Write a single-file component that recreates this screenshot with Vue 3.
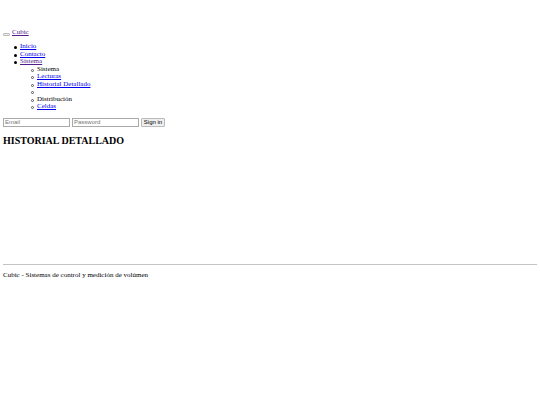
<script setup>
const links = [
  { text: 'Inicio' },
  { text: 'Contacto' },
  {
    text: 'Sistema',
    visited: true,
    children: [
      { text: 'Sistema', header: true },
      { text: 'Lecturas' },
      { text: 'Historial Detallado' },
      { text: '', header: true },
      { text: 'Distribución', header: true },
      { text: 'Celdas' },
    ],
  },
]
</script>

<template>
  <div class="page">
    <header>
      <div class="brand-row">
        <button type="button" class="toggle" aria-label="Menu"></button>
        <a href="#" class="visited">Cubic</a>
      </div>
      <nav>
        <ul class="menu">
          <li v-for="link in links" :key="link.text">
            <a href="#" :class="{ visited: link.visited }">{{ link.text }}</a>
            <ul v-if="link.children" class="submenu">
              <li v-for="(child, i) in link.children" :key="i">
                <template v-if="child.header">{{ child.text }}</template>
                <a v-else href="#">{{ child.text }}</a>
              </li>
            </ul>
          </li>
        </ul>
      </nav>
      <form class="login" @submit.prevent>
        <input type="text" placeholder="Email" aria-label="Email" />
        <input type="password" placeholder="Password" aria-label="Password" />
        <button type="submit">Sign in</button>
      </form>
    </header>
    <main>
      <h2>HISTORIAL DETALLADO</h2>
    </main>
    <hr />
    <footer>
      <p>Cubic - Sistemas de control y medición de volúmen</p>
    </footer>
  </div>
</template>

<style>
body {
  margin: 0;
  background: #fff;
}
</style>

<style scoped>
.page {
  padding: 29px 3px 0;
  color: #000;
  font-family: "Liberation Serif", "Times New Roman", serif;
  font-size: 7px;
  line-height: 1.08;
}
a {
  color: #0000ee;
  text-decoration: underline;
}
a.visited {
  color: #551a8b;
}
.brand-row {
  display: flex;
  align-items: center;
  gap: 2px;
  height: 8px;
}
.toggle {
  box-sizing: border-box;
  width: 7px;
  height: 3px;
  margin-top: 2px;
  padding: 0;
  border: 1px solid #bbb;
  border-radius: 1px;
  background: #efefef;
}
.menu,
.submenu {
  margin: 0;
  padding-left: 17px;
  list-style: none;
}
.menu {
  margin-top: 6px;
}
.menu li {
  position: relative;
  min-height: 1.08em;
}
/* Compact list markers */
.menu li::before {
  content: "";
  position: absolute;
  top: 3px;
  left: -6px;
  box-sizing: border-box;
  width: 3px;
  height: 3px;
  border-radius: 50%;
  background: #000;
}
.submenu li::before {
  border: 1px solid #555;
  background: #fff;
}
.login {
  display: flex;
  gap: 2px;
  margin-top: 7px;
}
.login input,
.login button {
  box-sizing: border-box;
  height: 9px;
  margin: 0;
  border: 1px solid #aaa;
  border-radius: 0;
  font-family: "Liberation Sans", Arial, sans-serif;
  font-size: 6px;
  line-height: 7px;
}
.login input {
  width: 67px;
  padding: 0 1px;
  background: #fff;
}
.login input::placeholder {
  color: #757575;
  opacity: 1;
}
.login button {
  width: 24px;
  padding: 0;
  border-color: #bbb;
  border-radius: 1px;
  background: #efefef;
  color: #000;
  white-space: nowrap;
}
main {
  min-height: 129px;
}
h2 {
  margin: 0;
  padding-top: 8px;
  font-size: 10px;
  line-height: 12px;
}
hr {
  height: 1px;
  margin: 8px 0 7px;
  border: 0;
  background: #c4c4c4;
}
p {
  margin: 0;
}
</style>
